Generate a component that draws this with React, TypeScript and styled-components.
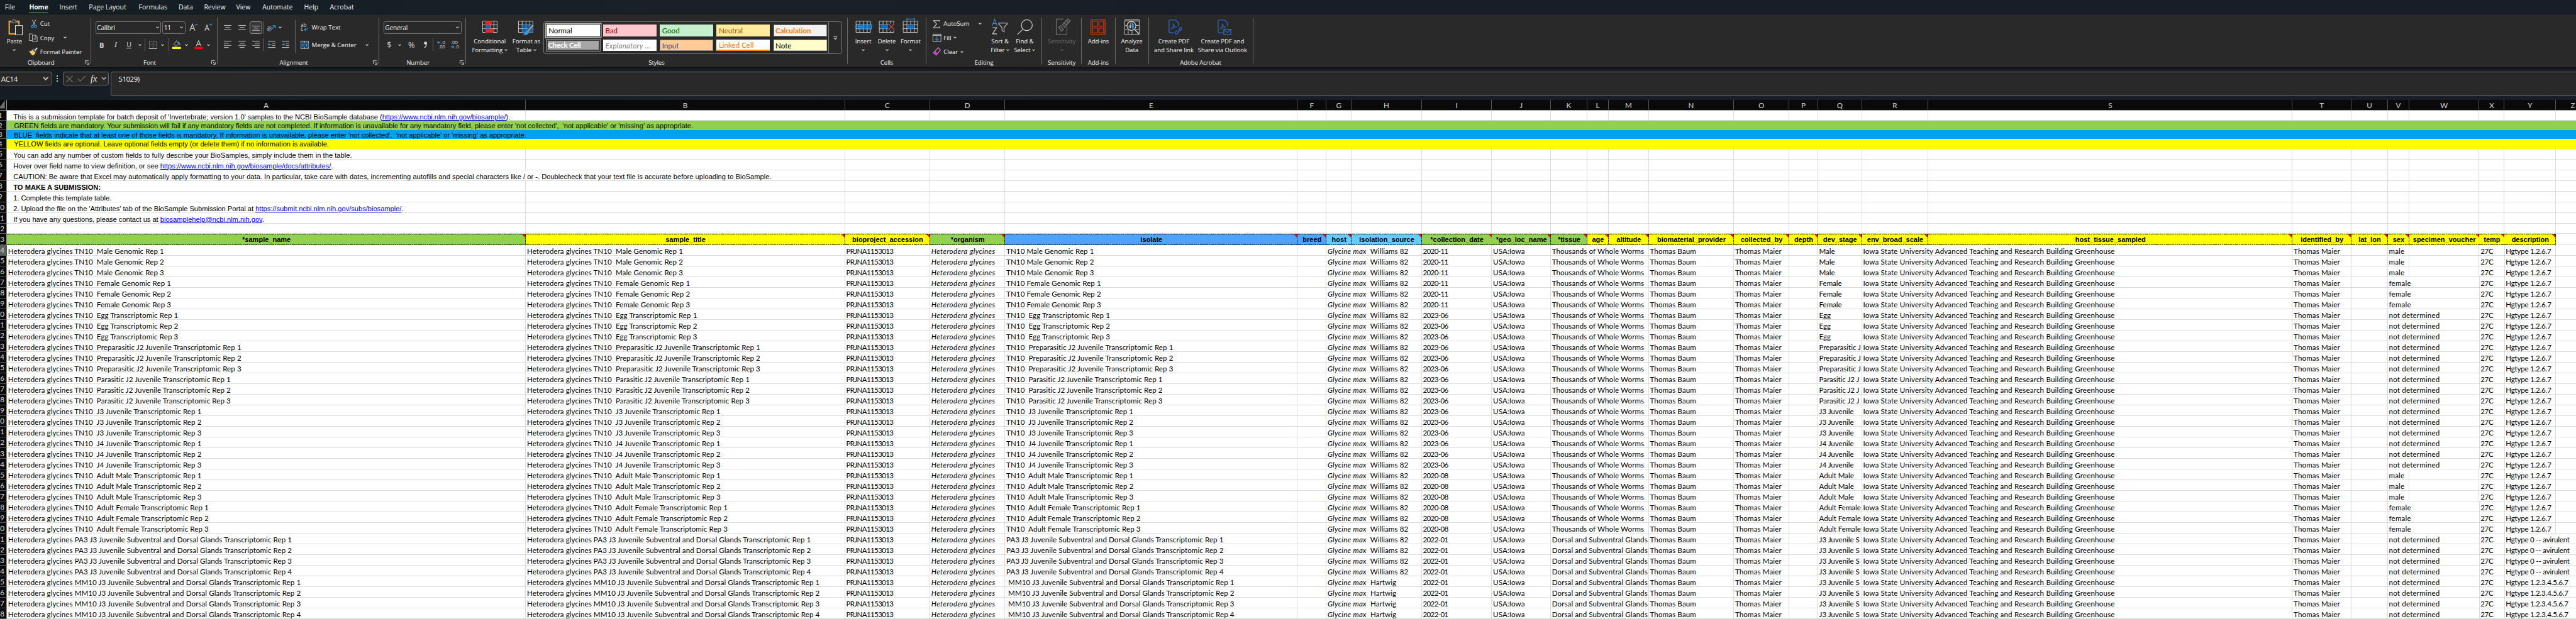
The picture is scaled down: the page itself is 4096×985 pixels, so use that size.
import React from "react";
import styled, { createGlobalStyle, css } from "styled-components";

/* ---------- base ---------- */

const GlobalStyle = createGlobalStyle`
  *, *::before, *::after { box-sizing: border-box; }
  html, body { margin: 0; padding: 0; background: #0a0a0a; overflow: hidden; }
  svg { flex: none; overflow: visible; }
`;

const UI_FONT = `"Open Sans", "Noto Sans", sans-serif`;
const CELL_FONT = `Lato, "Open Sans", sans-serif`;
const NOTE_FONT = `"Liberation Sans", Arial, sans-serif`;

const Workbook = styled.div`
  zoom: 0.85156;
  width: 4810px;
  height: 1157px;
  overflow: hidden;
  display: flex;
  flex-direction: column;
  background: linear-gradient(90deg, #131d22 0, #172026 900px, #1b2026 1500px, #191d27 2200px, #191d27 100%);
  font-family: ${UI_FONT};
  font-size: 11.4px;
  color: #f4f4f4;
  white-space: pre;
`;

/* ---------- tabs ---------- */

const TabBar = styled.nav`
  display: flex;
  height: 28px;
  padding-left: 9px;
`;

const Tab = styled.div<{ $w: number }>`
  width: ${(p) => p.$w}px;
  padding-top: 4px;
  line-height: 19px;
  font-size: 12.3px;
`;

const ActiveTab = styled.span`
  display: inline-block;
  height: 21px;
  font-weight: 700;
  letter-spacing: -0.3px;
  border-bottom: 2px solid #62c48b;
`;

/* ---------- ribbon ---------- */

const Ribbon = styled.div`
  display: flex;
  height: 100px;
  background: #292929;
  box-shadow: 0 1px 3px rgba(0, 0, 0, 0.7);
`;

const Divider = styled.div`
  flex: none;
  width: 1px;
  margin: 5px 0 6px;
  background: #666;
`;

const GroupBox = styled.section<{ $w: number }>`
  flex: none;
  width: ${(p) => p.$w}px;
  display: flex;
  flex-direction: column;
`;

const GroupBody = styled.div<{ $left: number }>`
  height: 81px;
  display: flex;
  padding-left: ${(p) => p.$left}px;
`;

const GroupFoot = styled.div`
  display: flex;
  align-items: center;
  height: 17px;
`;

const GroupName = styled.span`
  flex: 1;
  text-align: center;
  letter-spacing: -0.12px;
`;

const LauncherBox = styled.span`
  width: 16px;
  display: flex;
  align-items: center;
  padding-left: 5px;
`;

const Big = styled.div<{ $w: number; $dim?: boolean }>`
  flex: none;
  width: ${(p) => p.$w}px;
  display: flex;
  flex-direction: column;
  align-items: center;
  padding-top: 7px;
  color: ${(p) => (p.$dim ? "#6a6a6a" : "inherit")};
`;

const BigIcon = styled.div`
  height: 32px;
  display: flex;
  align-items: center;
  margin-bottom: 3px;
`;

const Line = styled.div`
  height: 16px;
  line-height: 16px;
  display: flex;
  align-items: center;
  justify-content: center;
  gap: 3px;
  letter-spacing: -0.1px;
`;

const SmallStack = styled.div<{ $w: number }>`
  flex: none;
  width: ${(p) => p.$w}px;
  padding-top: 4px;
`;

const Small = styled.div`
  height: 26px;
  display: flex;
  align-items: center;
  letter-spacing: -0.1px;
`;

const SmallIcon = styled.span<{ $w: number }>`
  width: ${(p) => p.$w}px;
  display: flex;
  align-items: center;
`;

const Gap = styled.span<{ $w: number }>`
  flex: none;
  width: ${(p) => p.$w}px;
`;

const ToolRows = styled.div<{ $w: number }>`
  flex: none;
  width: ${(p) => p.$w}px;
  padding-top: 8px;
`;

const Tools = styled.div`
  height: 32px;
  display: flex;
  align-items: center;
`;

const Slot = styled.span<{ $w: number; $dy?: number }>`
  flex: none;
  width: ${(p) => p.$w}px;
  display: flex;
  align-items: center;
  justify-content: center;
  padding-top: ${(p) => p.$dy || 0}px;
`;

const Pressed = styled.span`
  display: flex;
  align-items: flex-end;
  justify-content: center;
  width: 24px;
  height: 24px;
  padding-bottom: 4px;
  border: 1px solid #9a9a9a;
  border-radius: 4px;
  background: #383838;
`;

const Rule = styled.span<{ $h: number }>`
  width: 1px;
  height: ${(p) => p.$h}px;
  background: #666;
`;

const Combo = styled.span<{ $w: number }>`
  flex: none;
  display: flex;
  align-items: center;
  justify-content: space-between;
  width: ${(p) => p.$w}px;
  height: 24px;
  padding: 0 3px 0 2px;
  border: 1px solid #767676;
  border-radius: 3px;
  font-size: 11.8px;
  letter-spacing: -0.2px;
`;

const Glyph = styled.span<{ $size: number; $kind?: "bold" | "italic" | "under" }>`
  font-size: ${(p) => p.$size}px;
  line-height: 1;
  color: #d8d8d8;
  ${(p) => p.$kind === "bold" && css`font-weight: 700;`}
  ${(p) => p.$kind === "italic" && css`font-style: italic; font-family: "Liberation Serif", serif;`}
  ${(p) => p.$kind === "under" && css`border-bottom: 1px solid #d8d8d8;`}
`;

/* ---------- cell style gallery ---------- */

const Gallery = styled.div`
  display: flex;
  width: 557px;
  height: 61px;
  margin-top: 12px;
  border: 1px solid #767676;
  border-radius: 4px;
`;

const Swatches = styled.div`
  display: grid;
  grid-template-columns: repeat(5, 100px);
  grid-template-rows: 22px 22px;
  gap: 6px;
  padding: 5px 3px 0 4px;
`;

const Swatch = styled.div<{ $bg: string; $fg: string; $variant?: string; $border?: string }>`
  background: ${(p) => p.$bg};
  color: ${(p) => p.$fg};
  font-family: ${CELL_FONT};
  font-size: 13.6px;
  line-height: 20px;
  padding-left: 3px;
  border: 1px solid ${(p) => p.$border || p.$bg};
  ${(p) => p.$variant === "selected" && css`outline: 2px solid #292929; box-shadow: 0 0 0 3px #b0b0b0;`}
  ${(p) => p.$variant === "bold" && css`font-weight: 700; letter-spacing: -0.15px;`}
  ${(p) => p.$variant === "check" && css`
    font-weight: 700; line-height: 16px; padding-left: 1px; letter-spacing: -0.3px;
    border: 3px double #3f3f3f; outline: 1px solid #8a8a8a; outline-offset: -1px;`}
  ${(p) => p.$variant === "italic" && css`font-style: italic; letter-spacing: 0.25px;`}
  ${(p) => p.$variant === "linked" && css`line-height: 18px; border-bottom: 3px double #ff8001;`}
`;

const GalleryMore = styled.div`
  flex: 1;
  display: flex;
  align-items: center;
  justify-content: center;
  border-left: 1px solid #767676;
`;

/* ---------- formula bar ---------- */

const FormulaBar = styled.div`
  flex: none;
  display: flex;
  height: 61px;
  padding-top: 8px;
  font-size: 13.4px;
`;

const Box = styled.div<{ $w: number }>`
  flex: none;
  display: flex;
  align-items: center;
  width: ${(p) => p.$w}px;
  height: 26px;
  border: 1px solid #6c6c6c;
  border-radius: 4px;
  background: #292929;
`;

const NameBox = styled(Box)`
  justify-content: space-between;
  margin-left: -5px;
  padding: 0 5px 0 6px;
  letter-spacing: -0.4px;
`;

const Dots = styled.div`
  width: 20px;
  height: 26px;
  display: flex;
  flex-direction: column;
  align-items: center;
  justify-content: center;
  gap: 3px;
`;

const Dot = styled.i`
  width: 2px;
  height: 2px;
  background: #cfcfcf;
`;

const FxBox = styled(Box)`
  padding-left: 5px;
  gap: 8px;
`;

const Fx = styled.span`
  font: italic 17px "Liberation Serif", serif;
  color: #e8e8e8;
  margin-left: 1px;
`;

const FormulaInput = styled.div`
  flex: 1;
  height: 46px;
  margin-left: 4px;
  margin-right: -6px;
  padding: 3px 0 0 13px;
  line-height: 19px;
  border: 1px solid #6c6c6c;
  border-radius: 4px;
  background: #292929;
  letter-spacing: -0.5px;
`;

/* ---------- sheet ---------- */

const Sheet = styled.div`
  display: flex;
  flex-direction: column;
  width: 4850px;
`;

const HeadRow = styled.div`
  flex: none;
  display: flex;
  height: 20px;
  background: #0a0a0a;
  border-bottom: 1px solid #9b9b9b;
`;

const Corner = styled.div`
  flex: none;
  width: 13px;
  display: flex;
  align-items: flex-end;
  padding-bottom: 3px;
  border-right: 1px solid #9b9b9b;
  overflow: hidden;
`;

const ColHead = styled.div<{ $w: number }>`
  flex: none;
  width: ${(p) => p.$w}px;
  border-right: 1px solid #555;
  text-align: center;
  font-family: ${CELL_FONT};
  font-size: 13.6px;
  line-height: 22px;
  color: #d6d6d6;
`;

const RowBox = styled.div<{ $h: number; $fill?: string }>`
  flex: none;
  display: flex;
  height: ${(p) => p.$h}px;
  background: ${(p) => p.$fill || "#fff"};
  color: #000;
`;

const RowHead = styled.div<{ $on?: boolean }>`
  flex: none;
  width: 13px;
  display: flex;
  justify-content: center;
  align-items: center;
  padding-right: 11px;
  overflow: hidden;
  font-family: ${CELL_FONT};
  font-size: 13.6px;
  color: #d6d6d6;
  background: ${(p) => (p.$on ? "#5f5f5f" : "#0a0a0a")};
  border-right: 1px solid ${(p) => (p.$on ? "#1e7145" : "#9b9b9b")};
  border-bottom: 1px solid #5a5a5a;
`;

const Cell = styled.div<{ $w: number; $ls?: number; $italic?: boolean }>`
  flex: none;
  width: ${(p) => p.$w}px;
  overflow: hidden;
  padding-left: 2px;
  border-right: 1px solid #dcdcdc;
  border-bottom: 1px solid #dcdcdc;
  font-family: ${CELL_FONT};
  font-size: 13.6px;
  line-height: 22.5px;
  letter-spacing: ${(p) => p.$ls || 0}px;
  font-style: ${(p) => (p.$italic ? "italic" : "normal")};
`;

const HostName = styled.i`
  letter-spacing: 0.36px;
`;

const Note = styled.div<{ $w: number; $indent?: number; $bold?: boolean; $plain?: boolean; $lh?: number; $ls?: number }>`
  flex: none;
  width: ${(p) => p.$w}px;
  padding-left: ${(p) => p.$indent || 12}px;
  font-family: ${NOTE_FONT};
  font-size: 13.1px;
  letter-spacing: ${(p) => (p.$ls === undefined ? -0.03 : p.$ls)}px;
  line-height: ${(p) => p.$lh || 24}px;
  font-weight: ${(p) => (p.$bold ? 700 : 400)};
  ${(p) => !p.$plain && css`border-right: 1px solid #dcdcdc; border-bottom: 1px solid #dcdcdc;`}
`;

const Link = styled.a`
  color: #0000ee;
  text-decoration: underline;
`;

const DASH_H = "repeating-linear-gradient(90deg, #000 0 3px, transparent 3px 4px)";
const DASH_V = "repeating-linear-gradient(180deg, #000 0 3px, transparent 3px 4px)";

const FieldHead = styled.div<{ $w: number; $bg: string }>`
  flex: none;
  position: relative;
  width: ${(p) => p.$w}px;
  text-align: center;
  background:
    ${DASH_H} 0 0 / 100% 1px no-repeat,
    ${DASH_H} 0 100% / 100% 1px no-repeat,
    ${DASH_V} 100% 0 / 1px 100% no-repeat,
    ${(p) => p.$bg};
  font-family: ${NOTE_FONT};
  font-size: 12.95px;
  font-weight: 700;
  line-height: 23px;
`;

const CommentMark = styled.i`
  position: absolute;
  top: 1px;
  right: 1px;
  border-top: 6px solid #f00;
  border-left: 6px solid transparent;
`;

/* ---------- icons ---------- */

const Chevron = ({ s = 6, c = "#e6e6e6" }: { s?: number; c?: string }) => (
  <svg width={s} height={s * 0.62} viewBox="0 0 8 5" fill="none" stroke={c} strokeWidth="1.7"><path d="M.8.8 4 4 7.2.8" /></svg>
);

const Launcher = () => (
  <svg width="8" height="8" viewBox="0 0 8 8" fill="none" stroke="#dcdcdc"><path d="M.5 7V.5H7M2.5 2.5 6.5 6.5M7.5 3.5V7.5H3.5" /></svg>
);

const PasteIcon = () => (
  <svg width="28" height="31" viewBox="0 0 28 31" fill="none">
    <path d="M5.5 4.5H2V28H14" stroke="#f0a030" strokeWidth="2.6" /><path d="M15.5 4.5H20V11" stroke="#f0a030" strokeWidth="2.6" />
    <path d="M5 7.500V4.500H8C8 2 9.300 .8 10.800 .8S13.600 2 13.600 4.500H16.500V7.500Z" stroke="#b0b0b0" fill="#3a3a3a" />
    <rect x="13.500" y="12.500" width="13" height="17.500" stroke="#e6e6e6" fill="#292929" strokeWidth="1.200" />
  </svg>
);

const CutIcon = () => (
  <svg width="12" height="16" viewBox="0 0 12 16" fill="none">
    <path d="M2.500.5 8.200 11M9.500.5 3.800 11" stroke="#cfcfcf" strokeWidth="1.100" />
    <circle cx="3" cy="13" r="2.200" stroke="#3a96dd" strokeWidth="1.300" /><circle cx="9" cy="13" r="2.200" stroke="#3a96dd" strokeWidth="1.300" />
  </svg>
);

const CopyIcon = () => (
  <svg width="17" height="16" viewBox="0 0 17 16" fill="none" stroke="#d0d0d0">
    <path d="M7 1H.5V13.500H6" /><path d="M6.500 3.500H12.500L15.500 6.500V15.500H6.500Z" fill="#292929" /><path d="M12 3.500V7H15.500M9 9.500H13M9 12H13" />
  </svg>
);

const PainterIcon = () => (
  <svg width="17" height="16" viewBox="0 0 17 16" fill="none">
    <path d="M1 7.500C3.500 8 5 7 6.500 5.500L11.500 10.500C10.500 13 9 14.500 7.500 15.500C5 13.500 2.500 11 1 7.500Z" fill="#f3c86b" stroke="#f3c86b" />
    <path d="M6 4.500 12.500 11M8 3 14 9" stroke="#cfcfcf" /><path d="M11 6.500 15.500 1.500" stroke="#cfcfcf" strokeWidth="2.600" />
  </svg>
);

type AlignKind = "left" | "center" | "right";
const lineX: Record<AlignKind, [number, number]> = { left: [0, 9], center: [2.5, 11.5], right: [5, 14] };
const AlignIcon = ({ kind }: { kind: AlignKind }) => (
  <svg width="14" height="14" viewBox="0 0 14 14" stroke="#e0e0e0">
    <path d={`M0 .5H14M${lineX[kind][0]} 4.500H${lineX[kind][1]}M0 8.500H14M${lineX[kind][0]} 12.500H${lineX[kind][1]}`} />
  </svg>
);
const ValignIcon = () => (
  <svg width="14" height="10" viewBox="0 0 14 10" stroke="#e0e0e0"><path d="M0 .5H14M2.500 4.500H11.500M0 8.500H14" /></svg>
);

const IndentIcon = ({ out }: { out?: boolean }) => (
  <svg width="14" height="14" viewBox="0 0 14 14" fill="none" stroke="#e0e0e0">
    <path d="M0 .5H14M7.500 4.500H14M7.500 8.500H14M0 12.500H14" />
    <path stroke="#3a96dd" strokeWidth="1.200" d={out ? "M6 6.500H.8M3 4.200.8 6.500 3 8.800" : "M0 6.500H5.200M3 4.200 5.200 6.500 3 8.800"} />
  </svg>
);

const OrientIcon = () => (
  <svg width="17" height="17" viewBox="0 0 17 17" fill="none">
    <text x="-1" y="9" fontSize="9" fill="#d8d8d8" fontFamily="Open Sans" transform="rotate(-42 4 8) translate(-1 3)">ab</text>
    <path d="M5 15.500 15.500 5M11 4.500H16V9.500" stroke="#3a96dd" strokeWidth="1.300" />
  </svg>
);

const WrapIcon = () => (
  <svg width="15" height="16" viewBox="0 0 15 16" fill="none">
    <text x="0" y="6.500" fontSize="9.500" fill="#d8d8d8" fontFamily="Open Sans">ab</text>
    <text x="0" y="14.500" fontSize="9.500" fill="#d8d8d8" fontFamily="Open Sans">c</text>
    <path d="M13 8.500C13 11.500 11.500 12 7.500 12M9.800 9.500 7.200 12 9.800 14.500" stroke="#3a96dd" strokeWidth="1.400" />
  </svg>
);

const MergeIcon = () => (
  <svg width="15" height="15" viewBox="0 0 15 15" fill="none" stroke="#d8d8d8">
    <path d="M.5.5H14.500V14.500H.5ZM7.500 .5V3.500M7.500 11.500V14.500" /><rect x=".5" y="3.500" width="14" height="8" fill="#1c3d58" stroke="#3a96dd" />
    <path d="M2.500 7.500H12.500M4.500 5.500 2.500 7.500 4.500 9.500M10.500 5.500 12.500 7.500 10.500 9.500" stroke="#5cb2f0" />
  </svg>
);

const BorderIcon = () => (
  <svg width="15" height="15" viewBox="0 0 15 15" fill="none" stroke="#d8d8d8">
    <path d="M.5 14V.5H14.500V14M7.500 1V14M1 7.500H14" strokeDasharray="1 1" /><path d="M0 14.300H15" strokeWidth="1.400" />
  </svg>
);

const FillIcon = () => (
  <svg width="16" height="17" viewBox="0 0 16 17" fill="none">
    <path d="M7 2.500 2.500 7.500 7 11.500 12 6.500 7.500 2V.5" stroke="#d8d8d8" /><path d="M10.500 3C13 4 14 6 14 9.500" stroke="#3a96dd" strokeWidth="1.800" />
    <rect y="12.500" width="16" height="4" fill="#ff0" />
  </svg>
);

const FontColorIcon = () => (
  <svg width="16" height="17" viewBox="0 0 16 17" fill="none">
    <path d="M3.500 11 8 .8 12.500 11M5.200 7.500H10.800" stroke="#d8d8d8" strokeWidth="1.200" /><rect y="12.500" width="16" height="4" fill="red" />
  </svg>
);

const FontSizeIcon = ({ up }: { up?: boolean }) => (
  <svg width="16" height="15" viewBox="0 0 16 15" fill="none">
    <path d={up ? "M1 14 5.800 1.500 10.600 14M2.800 9.800H8.800" : "M2 14 6 3.500 10 14M3.500 10.300H8.500"} stroke="#d8d8d8" strokeWidth="1.300" />
    <path d={up ? "M11 4 13.200 1.800 15.400 4" : "M11 1.500 13.200 3.700 15.400 1.500"} stroke="#3a96dd" strokeWidth="1.400" />
  </svg>
);

const DecimalIcon = ({ more }: { more?: boolean }) => (
  <svg width="15" height="16" viewBox="0 0 15 16" fill="none">
    <text x={more ? 7.5 : 0} y="7" fontSize="9" fill="#d8d8d8" fontFamily="Open Sans">{more ? ".0" : ".00"}</text>
    <text x={more ? 2.5 : 7.5} y="15.500" fontSize="9" fill="#d8d8d8" fontFamily="Open Sans">{more ? ".00" : ".0"}</text>
    <path stroke="#3a96dd" strokeWidth="1.300" d={more ? "M6 4H.8M3 1.800.8 4 3 6.200" : "M0 12.500H5.200M3 10.300 5.200 12.500 3 14.700"} />
  </svg>
);

const gridLines = "M.5.5H27.500V21.500H.5ZM.5 7.500H27.500M.5 14.500H27.500M7.500 .5V21.500M14.500 .5V21.500M21.500 .5V21.500";
const ConditionalIcon = () => (
  <svg width="28" height="32" viewBox="0 -5 28 32" fill="none">
    <path d={gridLines} stroke="#e0e0e0" /><rect x="5.500" width="12" height="7.500" fill="#e02a1d" /><rect x="5.500" y="7.500" width="8" height="7" fill="#0a6cc4" />
    <rect x="5.500" y="14.500" width="14.500" height="7.500" fill="#e02a1d" />
  </svg>
);
const TableFormatIcon = () => (
  <svg width="30" height="32" viewBox="0 -5 30 32" fill="none">
    <path d={gridLines} stroke="#e0e0e0" /><path d="M7.500 7.500H27.500V21.500H7.500Z" fill="#0f5fa8" /><path d="M7.500 14.500H27M14.500 7.500V21.500M21.500 7.500V21.500" stroke="#5cb2f0" />
    <path d="M28 8 18 19" stroke="#292929" strokeWidth="5" /><path d="M28 8 18 19" stroke="#c8c8c8" strokeWidth="3" /><path d="M28 8 18 19" stroke="#444" strokeWidth="1" />
    <path d="M18 18C13 17.500 15 23.500 8.500 24.500C12 27.500 19 27 20 21Z" fill="#3a96dd" />
  </svg>
);

const CellsIcon = ({ kind }: { kind: "insert" | "delete" | "format" }) => (
  <svg width="32" height="32" viewBox="-2 -5 32 32" fill="none">
    <path d={gridLines} stroke="#e0e0e0" />
    {kind === "insert" && <><rect x="6" y="7" width="23.500" height="8" fill="#0f6cbd" stroke="#5cb2f0" /><path d="M14 7V15M21.500 7V15" stroke="#5cb2f0" /><path d="M13 11H0M5 5.500-.8 11 5 16.500" stroke="#3a96dd" strokeWidth="1.600" /></>}
    {kind === "delete" && <><rect x="3" y="7.500" width="15" height="7" fill="#0f6cbd" /><rect x="17" y="5" width="13" height="13" fill="#292929" /><path d="M17.500 5.500 28.500 16.500M28.500 5.500 17.500 16.500" stroke="#e2504c" strokeWidth="1.400" /></>}
    {kind === "format" && <><rect x="7.500" y="7.500" width="14" height="7" fill="#0f6cbd" /><path d="M7.500 -3.500H21.500M7.500 -5.500V-1M21.500 -5.500V-1" stroke="#3a96dd" strokeWidth="1.400" /></>}
  </svg>
);

const SigmaIcon = () => (
  <svg width="14" height="15" viewBox="0 0 14 15" fill="none" stroke="#d8d8d8" strokeWidth="1.200"><path d="M12.500 3V.8H1.500L7.500 7.300 1.500 14H12.500V11.500" /></svg>
);
const FillDownIcon = () => (
  <svg width="16" height="15" viewBox="0 0 16 15" fill="none"><path d="M.5.5H15.500V14.500H.5ZM.5 2.800H15.500" stroke="#d8d8d8" /><path d="M8 4.500V12M5 9.300 8 12.200 11 9.300" stroke="#3a96dd" strokeWidth="1.300" /></svg>
);
const ClearIcon = () => (
  <svg width="16" height="16" viewBox="0 0 16 16" fill="none"><path d="M10.500 1 14.500 5.500 6.500 15 1.500 10.500Z" stroke="#e58be0" strokeWidth="1.200" /><path d="M4.500 7.500 9.500 11.500 6.500 15 1.500 10.500Z" fill="#b146c2" /></svg>
);
const SortIcon = () => (
  <svg width="30" height="30" viewBox="0 0 30 30" fill="none">
    <path d="M1 12.500 5.500 1 10 12.500M2.500 8.800H8.500" stroke="#3a96dd" strokeWidth="1.300" /><path d="M1.500 16.500H9L1.500 28H9.500" stroke="#d8d8d8" strokeWidth="1.300" />
    <path d="M13 8H29V9.500L23 16V24.500L19 21.500V16L13 9.500Z" stroke="#d8d8d8" strokeWidth="1.200" />
  </svg>
);
const FindIcon = () => (
  <svg width="30" height="32" viewBox="0 0 30 32" fill="none" stroke="#d8d8d8" strokeWidth="1.300"><circle cx="18.500" cy="13" r="10.200" /><path d="M11.500 20.500 .8 30.500" /></svg>
);
const SensitivityIcon = () => (
  <svg width="28" height="32" viewBox="0 0 28 32" fill="none" stroke="#7d7d7d" strokeWidth="1.200">
    <path d="M14 1.500H.8V30.500H20.500V15" /><path d="M5 17 9 14 14 21 10 24ZM12 12 22 1 27 5 16 17Z" fill="#3a3a3a" /><path d="M15 8.500 20 13M19 4 24 9" />
  </svg>
);
const AddinsIcon = () => (
  <svg width="28" height="29" viewBox="0 0 28 29" fill="none" stroke="#d83b01" strokeWidth="1.400">
    <path d="M.8.8H27.200V28.200H.8Z" /><path d="M3.500 3.500H12.500V12.800H3.500ZM15.500 3.500H24.500V12.800H15.500ZM3.500 16H12.500V25.200H3.500ZM15.500 16H24.500V25.200H15.500Z" />
  </svg>
);
const AnalyzeIcon = () => (
  <svg width="28" height="29" viewBox="0 0 28 29" fill="none" stroke="#d8d8d8">
    <path d="M.5.5H27.500V28H.5Z" /><path d="M1 2.500H27" stroke="#6f6f6f" strokeWidth="3" /><path d="M1 11H5M1 19H7M21 11H27M21 19H27M7 20V28M14 22V28" />
    <circle cx="13" cy="12" r="8.300" fill="#292929" strokeWidth="1.400" /><path d="M19 18.500 27.500 27.500" strokeWidth="1.700" />
    <path d="M8.500 16.500V11.500H11V16.500M11.500 16.500V6.500H14.500V16.500" /><rect x="15" y="9" width="2.500" height="7.500" stroke="#3a96dd" fill="#0f6cbd" />
  </svg>
);
const PdfIcon = ({ mail }: { mail?: boolean }) => (
  <svg width="26" height="29" viewBox="0 0 26 29" fill="none" stroke="#2f62c9" strokeWidth="1.600">
    <path d="M10 25H3.500C2 25 1 24 1 22.500V3.500C1 2 2 1 3.500 1H13L18.500 6.500V13" />
    <path d="M4.500 18C8 16 10 11 9 7.500C11 13 12 14 15.500 14.500C11 14 8 15.500 4.500 18Z" strokeWidth="1.200" />
    {mail
      ? <><path d="M11.500 18.500H25V28H11.500Z" fill="#292929" /><path d="M11.500 19 18.200 24 25 19" /></>
      : <path d="M15.500 20.500 12.500 24C11 26 14 28.800 16 27L19 23.500M17 23.500 21.500 18.500M18.500 18.500 21.500 15.500C23.500 13.800 26 16.500 24.300 18.500L21 22" />}
  </svg>
);

/* ---------- ribbon composition ---------- */

const Group = ({ w, left = 0, name = "", launcher, children }: { w: number; left?: number; name?: string; launcher?: boolean; children: React.ReactNode }) => (
  <>
    <GroupBox $w={w}>
      <GroupBody $left={left}>{children}</GroupBody>
      <GroupFoot><GroupName>{name}</GroupName>{launcher && <LauncherBox><Launcher /></LauncherBox>}</GroupFoot>
    </GroupBox>
    <Divider />
  </>
);

const BigButton = ({ w, icon, lines, menu, dim }: { w: number; icon: React.ReactNode; lines: string[]; menu?: boolean; dim?: boolean }) => (
  <Big $w={w} $dim={dim}>
    <BigIcon>{icon}</BigIcon>
    <Line>{lines[0]}</Line>
    {(lines[1] || menu) && <Line>{lines[1]}{menu && <Chevron c={dim ? "#6a6a6a" : undefined} />}</Line>}
  </Big>
);

const tabs: [string, number][] = [
  ["File", 45.5], ["Home", 56.5], ["Insert", 55], ["Page Layout", 93], ["Formulas", 74.5], ["Data", 47.5],
  ["Review", 60], ["View", 49], ["Automate", 78], ["Help", 48], ["Acrobat", 60],
];

const swatches: [string, string, string, string?, string?][] = [
  ["Normal", "#ffffff", "#000000", "selected"], ["Bad", "#ffc7ce", "#9c0006"], ["Good", "#c6efce", "#006100"],
  ["Neutral", "#ffeb9c", "#9c5700"], ["Calculation", "#f2f2f2", "#fa7d00", "bold", "#7f7f7f"],
  ["Check Cell", "#a5a5a5", "#ffffff", "check"], ["Explanatory ...", "#ffffff", "#7f7f7f", "italic"], ["Input", "#ffcc99", "#3f3f76", "", "#7f7f7f"],
  ["Linked Cell", "#ffffff", "#fa7d00", "linked"], ["Note", "#ffffcc", "#000000", "", "#b2b2b2"],
];

const RibbonBar = () => (
  <Ribbon>
    <Group w={169} name="Clipboard" launcher>
      <BigButton w={54} icon={<><Gap $w={5} /><PasteIcon /></>} lines={["Paste"]} menu />
      <SmallStack $w={115}>
        <Small><SmallIcon $w={21}><Gap $w={3} /><CutIcon /></SmallIcon>Cut</Small>
        <Small><SmallIcon $w={21}><CopyIcon /></SmallIcon>Copy<Gap $w={17} /><Chevron /></Small>
        <Small><SmallIcon $w={21}><PainterIcon /></SmallIcon>Format Painter</Small>
      </SmallStack>
    </Group>
    <Group w={235} left={8} name="Font" launcher>
      <ToolRows $w={222}>
        <Tools>
          <Combo $w={123}>Calibri<Chevron /></Combo><Gap $w={2} /><Combo $w={43}>11<Chevron /></Combo>
          <Slot $w={30}><FontSizeIcon up /></Slot><Slot $w={24}><FontSizeIcon /></Slot>
        </Tools>
        <Tools>
          <Slot $w={24}><Glyph $size={13} $kind="bold">B</Glyph></Slot>
          <Slot $w={28}><Glyph $size={15} $kind="italic">I</Glyph></Slot>
          <Slot $w={22} $dy={1}><Glyph $size={12.5} $kind="under">U</Glyph></Slot>
          <Slot $w={18}><Chevron /></Slot><Slot $w={2}><Rule $h={23} /></Slot>
          <Slot $w={28}><BorderIcon /></Slot><Slot $w={8}><Chevron /></Slot><Slot $w={14}><Rule $h={23} /></Slot>
          <Slot $w={16}><FillIcon /></Slot><Slot $w={20}><Chevron /></Slot>
          <Slot $w={26}><FontColorIcon /></Slot><Slot $w={10}><Chevron /></Slot>
        </Tools>
      </ToolRows>
    </Group>
    <Group w={301} left={6} name="Alignment" launcher>
      <ToolRows $w={138}>
        <Tools>
          <Slot $w={27}><ValignIcon /></Slot><Slot $w={26}><ValignIcon /></Slot>
          <Slot $w={26}><Pressed><ValignIcon /></Pressed></Slot><Slot $w={2}><Rule $h={23} /></Slot>
          <Slot $w={28}><OrientIcon /></Slot><Slot $w={5}><Chevron /></Slot>
        </Tools>
        <Tools>
          <Slot $w={27}><AlignIcon kind="left" /></Slot><Slot $w={26}><AlignIcon kind="center" /></Slot>
          <Slot $w={26}><AlignIcon kind="right" /></Slot><Slot $w={2}><Rule $h={23} /></Slot>
          <Slot $w={28}><IndentIcon out /></Slot><Slot $w={24}><IndentIcon /></Slot>
        </Tools>
      </ToolRows>
      <Slot $w={2}><Rule $h={62} /></Slot>
      <ToolRows $w={150}>
        <Tools><Gap $w={10} /><SmallIcon $w={20}><WrapIcon /></SmallIcon>Wrap Text</Tools>
        <Tools><Gap $w={10} /><SmallIcon $w={20}><MergeIcon /></SmallIcon>Merge &amp; Center<Gap $w={17} /><Chevron /></Tools>
      </ToolRows>
    </Group>
    <Group w={161} left={8} name="Number" launcher>
      <ToolRows $w={150}>
        <Tools><Combo $w={146}>General<Chevron /></Combo></Tools>
        <Tools>
          <Slot $w={22}><Glyph $size={15}>$</Glyph></Slot><Slot $w={16}><Chevron /></Slot>
          <Slot $w={29}><Glyph $size={15}>%</Glyph></Slot>
          <Slot $w={24}><svg width="6" height="13" viewBox="0 0 6 13"><circle cx="3" cy="3" r="2.800" fill="#d8d8d8" /><path d="M4.500 3C5 7 3.500 10 1 12" stroke="#d8d8d8" strokeWidth="1.600" fill="none" /></svg></Slot>
          <Slot $w={4}><Rule $h={23} /></Slot>
          <Slot $w={26}><DecimalIcon more /></Slot><Slot $w={26}><DecimalIcon /></Slot>
        </Tools>
      </ToolRows>
    </Group>
    <Group w={712} left={8} name="Styles">
      <BigButton w={73} icon={<ConditionalIcon />} lines={["Conditional", "Formatting"]} menu />
      <BigButton w={64} icon={<TableFormatIcon />} lines={["Format as", "Table"]} menu />
      <Gallery>
        <Swatches>
          {swatches.map(([t, bg, fg, v, b]) => <Swatch key={t} $bg={bg} $fg={fg} $variant={v} $border={b}>{t}</Swatch>)}
        </Swatches>
        <GalleryMore><svg width="8" height="7" viewBox="0 0 8 7" fill="none" stroke="#e6e6e6" strokeWidth="1.300"><path d="M.5.800H7.500M1 3.300 4 6.200 7 3.300" /></svg></GalleryMore>
      </Gallery>
    </Group>
    <Group w={146} left={7} name="Cells">
      <BigButton w={44} icon={<CellsIcon kind="insert" />} lines={["Insert"]} menu />
      <BigButton w={44} icon={<CellsIcon kind="delete" />} lines={["Delete"]} menu />
      <BigButton w={45} icon={<CellsIcon kind="format" />} lines={["Format"]} menu />
    </Group>
    <Group w={215} left={12} name="Editing">
      <SmallStack $w={103}>
        <Small><SmallIcon $w={20}><SigmaIcon /></SmallIcon>AutoSum<Gap $w={17} /><Chevron /></Small>
        <Small><SmallIcon $w={20}><FillDownIcon /></SmallIcon>Fill<Gap $w={4} /><Chevron /></Small>
        <Small><SmallIcon $w={20}><ClearIcon /></SmallIcon>Clear<Gap $w={4} /><Chevron /></Small>
      </SmallStack>
      <BigButton w={45} icon={<SortIcon />} lines={["Sort &", "Filter"]} menu />
      <BigButton w={47} icon={<FindIcon />} lines={["Find &", "Select"]} menu />
    </Group>
    <Group w={73} name="Sensitivity">
      <BigButton w={73} icon={<><Gap $w={6} /><SensitivityIcon /></>} lines={["Sensitivity"]} menu dim />
    </Group>
    <Group w={62} name="Add-ins"><BigButton w={62} icon={<AddinsIcon />} lines={["Add-ins"]} /></Group>
    <Group w={61}><BigButton w={61} icon={<AnalyzeIcon />} lines={["Analyze", "Data"]} /></Group>
    <Group w={194} left={2} name="Adobe Acrobat">
      <BigButton w={90} icon={<><Gap $w={6} /><PdfIcon /></>} lines={["Create PDF", "and Share link"]} />
      <BigButton w={92} icon={<><Gap $w={8} /><PdfIcon mail /></>} lines={["Create PDF and", "Share via Outlook"]} />
    </Group>
  </Ribbon>
);

/* ---------- sheet data ---------- */

const G = "#92d050", Y = "#ffff00", B1 = "#4fa3ff", B2 = "#66ccff";
const columns: [string, number, string, string][] = [
  ["A", 969, "*sample_name", G], ["B", 596, "sample_title", Y], ["C", 159, "bioproject_accession", Y], ["D", 140, "*organism", G],
  ["E", 546, "isolate", B1], ["F", 54, "breed", B1], ["G", 47, "host", B2], ["H", 131, "isolation_source", B2],
  ["I", 131, "*collection_date", G], ["J", 110, "*geo_loc_name", G], ["K", 68, "*tissue", G], ["L", 40, "age", Y], ["M", 75, "altitude", Y],
  ["N", 159, "biomaterial_provider", Y], ["O", 103, "collected_by", Y], ["P", 54, "depth", Y], ["Q", 82, "dev_stage", Y],
  ["R", 124, "env_broad_scale", Y], ["S", 680, "host_tissue_sampled", Y], ["T", 110, "identified_by", Y], ["U", 68, "lat_lon", Y],
  ["V", 40, "sex", Y], ["W", 131, "specimen_voucher", Y], ["X", 47, "temp", Y], ["Y", 96, "description", Y], ["Z", 64, "", ""],
];
const W: Record<string, number> = Object.fromEntries(columns.map(([c, w]) => [c, w]));
const allWidth = columns.reduce((n, c) => n + c[1], 0);

interface Batch { strain: string; label: string; lead: string; stage: string; date: string; sex: string; reps: number; host?: string; type?: string; tissue?: string }
const TX = "Transcriptomic";
const tn = (label: string, stage: string, date: string, sex = "not determined", lead = " "): Batch => ({ strain: "TN10 ", label, lead, stage, date, sex, reps: 3 });
const glands = "J3 Juvenile Subventral and Dorsal Glands " + TX;
const batches: Batch[] = [
  tn("Male Genomic", "Male", "2020-11", "male", ""),
  tn("Female Genomic", "Female", "2020-11", "female", ""),
  tn("Egg " + TX, "Egg", "2023-06"),
  tn("Preparasitic J2 Juvenile " + TX, "Preparasitic J", "2023-06"),
  tn("Parasitic J2 Juvenile " + TX, "Parasitic J2 J", "2023-06"),
  tn("J3 Juvenile " + TX, "J3 Juvenile", "2023-06"),
  tn("J4 Juvenile " + TX, "J4 Juvenile", "2023-06"),
  tn("Adult Male " + TX, "Adult Male", "2020-08", "male"),
  tn("Adult Female " + TX, "Adult Female", "2020-08", "female"),
  { strain: "PA3", label: glands, lead: "", stage: "J3 Juvenile S", date: "2022-01", sex: "not determined", reps: 4, type: "Hgtype 0 -- avirulent", tissue: "Dorsal and Subventral Glands" },
  { strain: "MM10", label: glands, lead: "", stage: "J3 Juvenile S", date: "2022-01", sex: "not determined", reps: 4, host: "Hartwig", type: "Hgtype 1.2.3.4.5.6.7", tissue: "Dorsal and Subventral Glands" },
];
const samples = batches.flatMap((b) => Array.from({ length: b.reps }, (_, i) => ({ ...b, rep: i + 1 })));

const SampleRow = ({ n, s }: { n: number; s: Batch & { rep: number } }) => {
  const full = `Heterodera glycines ${s.strain} ${s.label} Rep ${s.rep}`;
  const isolate = `${s.strain === "MM10" ? " " : ""}${s.strain.trim()} ${s.lead}${s.label} Rep ${s.rep}`;
  const wide = s.type ? W.Y + W.Z : W.Y;
  return (
    <RowBox $h={20}>
      <RowHead $on={n === 14}>{n}</RowHead>
      <Cell $w={W.A} $ls={0.09}>{full}</Cell>
      <Cell $w={W.B} $ls={0.09}>{full}</Cell>
      <Cell $w={W.C} $ls={-0.76}>PRJNA1153013</Cell>
      <Cell $w={W.D} $ls={0.44} $italic>Heterodera glycines</Cell>
      <Cell $w={W.E} $ls={0.09}>{isolate}</Cell>
      <Cell $w={W.F} />
      <Cell $w={W.G + W.H} $ls={0.1}><HostName>Glycine max</HostName>{"  " + (s.host || "Williams 82")}</Cell>
      <Cell $w={W.I} $ls={-0.76}>{s.date}</Cell>
      <Cell $w={W.J} $ls={0.12}>USA:Iowa</Cell>
      <Cell $w={W.K + W.L + W.M} $ls={0.11}>{s.tissue || "Thousands of Whole Worms"}</Cell>
      <Cell $w={W.N} $ls={0.14}>Thomas Baum</Cell>
      <Cell $w={W.O} $ls={0.14}>Thomas Maier</Cell>
      <Cell $w={W.P} />
      <Cell $w={W.Q} $ls={-0.05}>{s.stage}</Cell>
      <Cell $w={W.R + W.S} $ls={0.22}>Iowa State University Advanced Teaching and Research Building Greenhouse</Cell>
      <Cell $w={W.T} $ls={0.14}>Thomas Maier</Cell>
      <Cell $w={W.U} />
      {s.sex === "male"
        ? <><Cell $w={W.V} $ls={0.14}>male</Cell><Cell $w={W.W} /></>
        : <Cell $w={W.V + W.W} $ls={0.2}>{s.sex}</Cell>}
      <Cell $w={W.X} $ls={-0.4}>27C</Cell>
      <Cell $w={wide} $ls={-0.25}>{s.type || "Hgtype 1.2.6.7"}</Cell>
      {!s.type && <Cell $w={W.Z} />}
    </RowBox>
  );
};

const NoteRow = ({ n, h = 20, bold, ls, span = 1, children }: { n: number; h?: number; bold?: boolean; ls?: number; span?: number; children?: React.ReactNode }) => (
  <RowBox $h={h}>
    <RowHead>{n}</RowHead>
    <Note $w={columns.slice(0, span).reduce((a, c) => a + c[1], 0)} $bold={bold} $ls={ls}>{children}</Note>
    {columns.slice(span).map(([c, w]) => <Cell key={c} $w={w} />)}
  </RowBox>
);

const BandRow = ({ n, h, fill, children }: { n: number; h: number; fill: string; children: React.ReactNode }) => (
  <RowBox $h={h} $fill={fill}>
    <RowHead>{n}</RowHead>
    <Note $w={allWidth} $indent={13} $lh={20} $plain>{children}</Note>
  </RowBox>
);

export default function App() {
  return (
    <>
      <GlobalStyle />
      <Workbook>
        <TabBar>
          {tabs.map(([t, w]) => <Tab key={t} $w={w}>{t === "Home" ? <ActiveTab>{t}</ActiveTab> : t}</Tab>)}
        </TabBar>
        <RibbonBar />
        <FormulaBar>
          <NameBox $w={102}>AC14<Chevron s={11} c="#c0c0c0" /></NameBox>
          <Dots><Dot /><Dot /><Dot /></Dots>
          <FxBox $w={86}>
            <svg width="13" height="13" viewBox="0 0 13 13" stroke="#7c7c7c" strokeWidth="1.200"><path d="M.8.8 12.200 12.200M12.200.8.8 12.200" /></svg>
            <svg width="16" height="12" viewBox="0 0 16 12" fill="none" stroke="#7c7c7c" strokeWidth="1.200"><path d="M.8 6 5.500 11 15.200.8" /></svg>
            <Fx>fx</Fx>
            <Chevron s={10} c="#a0a0a0" />
          </FxBox>
          <FormulaInput>51029)</FormulaInput>
        </FormulaBar>
        <Sheet>
          <HeadRow>
            <Corner><svg width="10" height="16" viewBox="0 0 10 16"><path d="M9 1V16H0V13Z" fill="#6e6e6e" /></svg></Corner>
            {columns.map(([c, w]) => <ColHead key={c} $w={w}>{c}</ColHead>)}
          </HeadRow>
          <NoteRow n={1} h={19}>This is a submission template for batch deposit of 'Invertebrate; version 1.0' samples to the NCBI BioSample database (<Link>https://www.ncbi.nlm.nih.gov/biosample/</Link>).</NoteRow>
          <BandRow n={2} h={17} fill={G}>GREEN fields are mandatory. Your submission will fail if any mandatory fields are not completed. If information is unavailable for any mandatory field, please enter 'not collected',  'not applicable' or 'missing' as appropriate.</BandRow>
          <BandRow n={3} h={17} fill="#00a0f3">BLUE  fields indicate that at least one of those fields is mandatory. If information is unavailable, please enter 'not collected',  'not applicable' or 'missing' as appropriate.</BandRow>
          <BandRow n={4} h={18} fill={Y}>YELLOW fields are optional. Leave optional fields empty (or delete them) if no information is available.</BandRow>
          <NoteRow n={5} ls={0.02}>You can add any number of custom fields to fully describe your BioSamples, simply include them in the table.</NoteRow>
          <NoteRow n={6}>Hover over field name to view definition, or see <Link>https://www.ncbi.nlm.nih.gov/biosample/docs/attributes/</Link>.</NoteRow>
          <NoteRow n={7} span={2} ls={0.01}>CAUTION: Be aware that Excel may automatically apply formatting to your data. In particular, take care with dates, incrementing autofills and special characters like / or -. Doublecheck that your text file is accurate before uploading to BioSample.</NoteRow>
          <NoteRow n={8} bold ls={0}>TO MAKE A SUBMISSION:</NoteRow>
          <NoteRow n={9}>1. Complete this template table.</NoteRow>
          <NoteRow n={10}>2. Upload the file on the 'Attributes' tab of the BioSample Submission Portal at <Link>https://submit.ncbi.nlm.nih.gov/subs/biosample/</Link>.</NoteRow>
          <NoteRow n={11}>If you have any questions, please contact us at <Link>biosamplehelp@ncbi.nlm.nih.gov</Link>.</NoteRow>
          <NoteRow n={12} h={19} />
          <RowBox $h={21}>
            <RowHead>13</RowHead>
            {columns.map(([c, w, name, bg]) => name
              ? <FieldHead key={c} $w={w} $bg={bg}>{name}<CommentMark /></FieldHead>
              : <Cell key={c} $w={w} />)}
          </RowBox>
          {samples.map((s, i) => <SampleRow key={i} n={14 + i} s={s} />)}
        </Sheet>
      </Workbook>
    </>
  );
}
